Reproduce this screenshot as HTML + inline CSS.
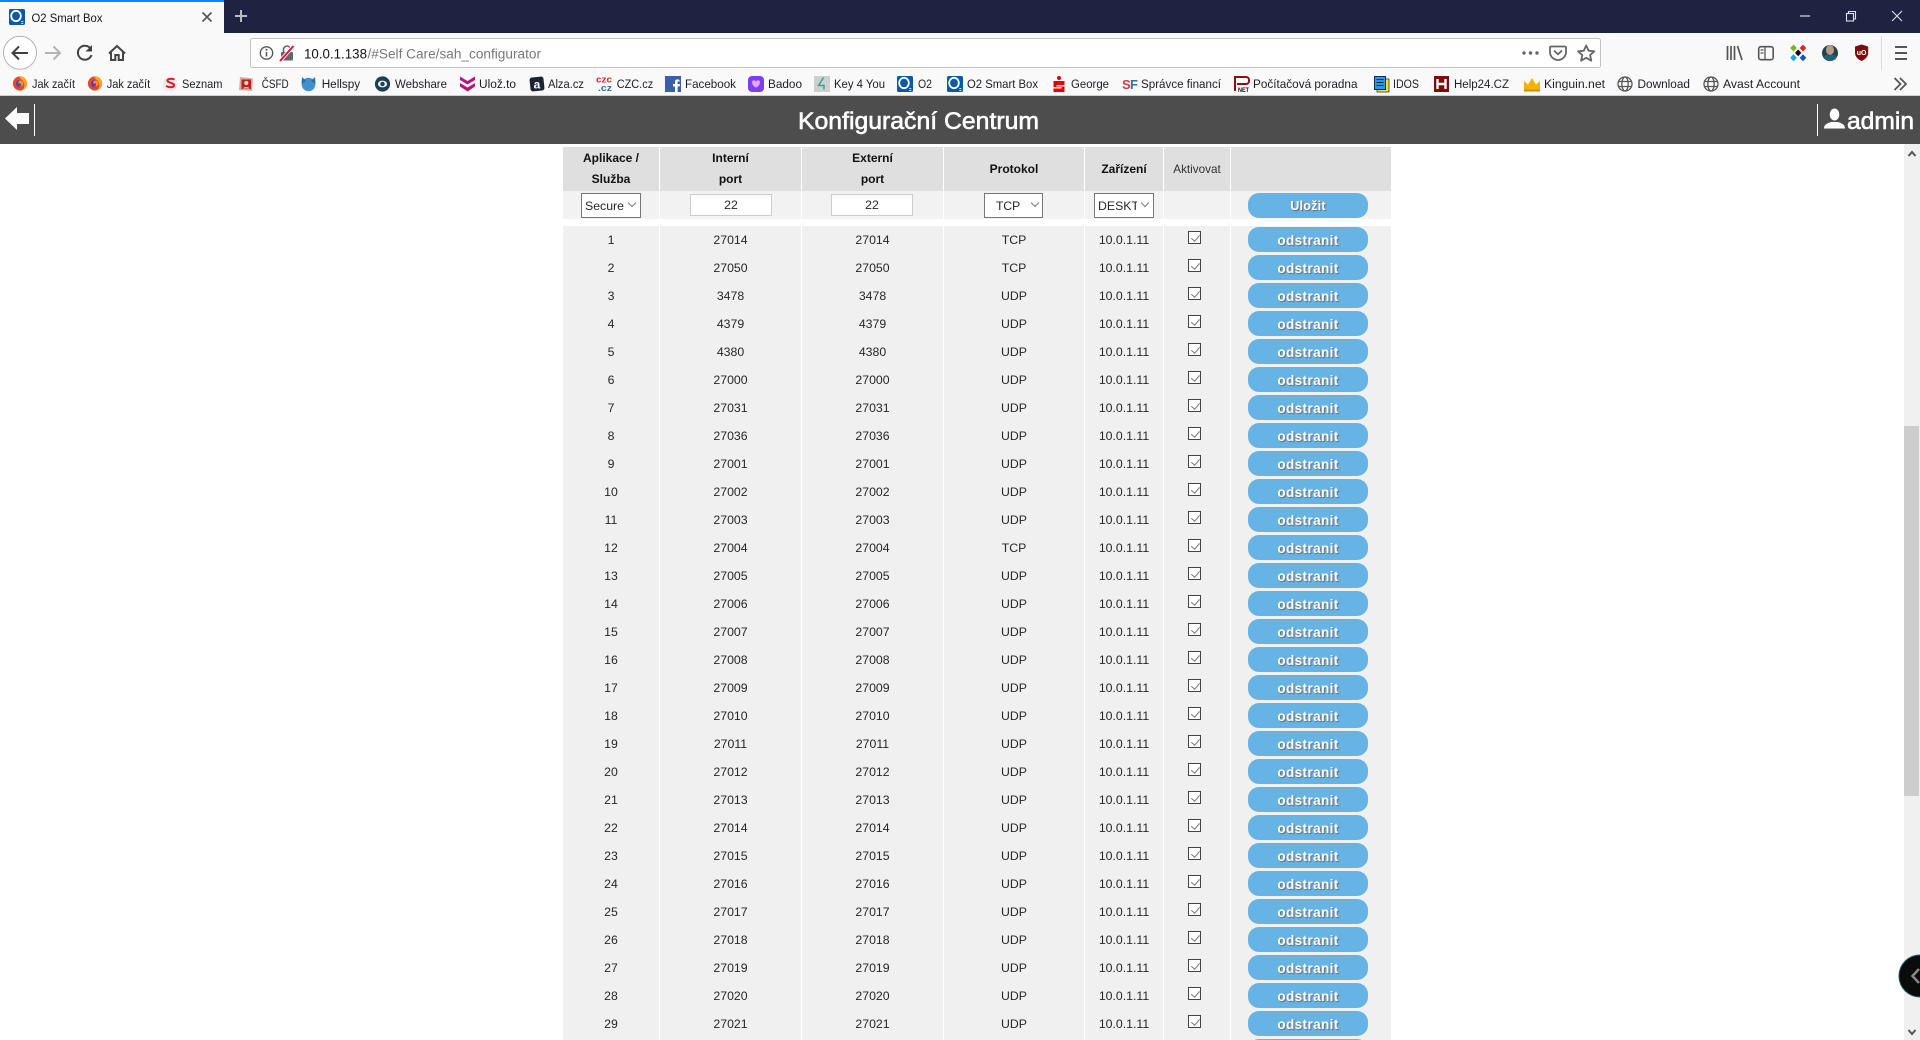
<!DOCTYPE html>
<html lang="cs"><head><meta charset="utf-8"><title>O2 Smart Box</title>
<style>
html,body{margin:0;padding:0;background:#fff;width:1920px;height:1040px;overflow:hidden}
#page{position:relative;width:1920px;height:1040px;overflow:hidden;font-family:"Liberation Sans",sans-serif;color:#222}
#ch{position:absolute;left:0;top:0}
#ch text{font-family:"Liberation Sans",sans-serif}
.bm{font-size:12.3px;fill:#1c1c24}
.t{position:absolute;left:563px;top:147px;width:828px}
.r{display:grid;grid-template-columns:96px 141px 141px 140px 78px 66px 160px;column-gap:1px;height:27px;margin-bottom:1px;font-size:12.3px;color:#262626}
.r>span{background:#f0f0f0;text-align:center;line-height:28.5px;position:relative;display:block}
.h{height:43px}
.h>span{background:#dfdfdf;font-weight:bold;font-size:12px;line-height:21px;padding-top:.5px;color:#111}
.h>span.m{line-height:44.5px;padding:0}
.h>span.a{font-weight:normal;font-size:11.7px;color:#333;line-height:46px;padding:0}
.f{height:28px;margin-bottom:7px}
.f>span{background:#f2f2f2}
.b{position:absolute;left:17px;top:1px;width:120px;height:25px;border-radius:11px;background:#66b3e6;color:#fff;font-weight:bold;font-size:13.6px;letter-spacing:.35px;line-height:27px;text-align:center;text-shadow:1px 1px 1px #6a6a6a}
.f .b{top:2px;font-size:12.6px;letter-spacing:.2px;line-height:26.5px}
.c{position:absolute;left:24px;top:5px;width:11px;height:11px;border:1.3px solid #444;background:#fff;box-sizing:content-box}
.c:after{content:"";position:absolute;left:3.5px;top:.5px;width:3.5px;height:7px;border:solid #777;border-width:0 1.2px 1.2px 0;transform:rotate(40deg)}
.s{position:absolute;box-sizing:border-box;top:193px;height:25px;background:#fff;border:1px solid #767676;font-size:12.3px;line-height:24px;color:#262626;overflow:hidden;white-space:nowrap}
.s:after{content:"";position:absolute;left:47px;top:6px;width:5px;height:5px;border:solid #777;border-width:0 1px 1px 0;transform:rotate(45deg);background:#fff;box-shadow:4px 4px 0 #fff}
.i{position:absolute;box-sizing:border-box;top:194px;height:22px;width:82px;background:#fff;border:1px solid #ccc;text-align:center;font-size:12.3px;line-height:21.5px;color:#262626}
#sb{position:absolute;left:1904px;top:144px;width:16px;height:896px;background:#f0f0f0}
#th{position:absolute;left:1904px;top:426px;width:15px;height:370px;background:#cdcdcd}
#ov{position:absolute;left:0;top:0;pointer-events:none}
</style></head><body>
<div id="page">

<div class="t">
<div class="r h"><span>Aplikace /<br>Služba</span><span>Interní<br>port</span><span>Externí<br>port</span><span class="m">Protokol</span><span class="m">Zařízení</span><span class="a">Aktivovat</span><span></span></div>
<div class="r f"><span></span><span></span><span></span><span></span><span></span><span></span><span><div class="b">Uložit</div></span></div>
<div class="r"><span>1</span><span>27014</span><span>27014</span><span>TCP</span><span>10.0.1.11</span><span><div class="c"></div></span><span><div class="b">odstranit</div></span></div>
<div class="r"><span>2</span><span>27050</span><span>27050</span><span>TCP</span><span>10.0.1.11</span><span><div class="c"></div></span><span><div class="b">odstranit</div></span></div>
<div class="r"><span>3</span><span>3478</span><span>3478</span><span>UDP</span><span>10.0.1.11</span><span><div class="c"></div></span><span><div class="b">odstranit</div></span></div>
<div class="r"><span>4</span><span>4379</span><span>4379</span><span>UDP</span><span>10.0.1.11</span><span><div class="c"></div></span><span><div class="b">odstranit</div></span></div>
<div class="r"><span>5</span><span>4380</span><span>4380</span><span>UDP</span><span>10.0.1.11</span><span><div class="c"></div></span><span><div class="b">odstranit</div></span></div>
<div class="r"><span>6</span><span>27000</span><span>27000</span><span>UDP</span><span>10.0.1.11</span><span><div class="c"></div></span><span><div class="b">odstranit</div></span></div>
<div class="r"><span>7</span><span>27031</span><span>27031</span><span>UDP</span><span>10.0.1.11</span><span><div class="c"></div></span><span><div class="b">odstranit</div></span></div>
<div class="r"><span>8</span><span>27036</span><span>27036</span><span>UDP</span><span>10.0.1.11</span><span><div class="c"></div></span><span><div class="b">odstranit</div></span></div>
<div class="r"><span>9</span><span>27001</span><span>27001</span><span>UDP</span><span>10.0.1.11</span><span><div class="c"></div></span><span><div class="b">odstranit</div></span></div>
<div class="r"><span>10</span><span>27002</span><span>27002</span><span>UDP</span><span>10.0.1.11</span><span><div class="c"></div></span><span><div class="b">odstranit</div></span></div>
<div class="r"><span>11</span><span>27003</span><span>27003</span><span>UDP</span><span>10.0.1.11</span><span><div class="c"></div></span><span><div class="b">odstranit</div></span></div>
<div class="r"><span>12</span><span>27004</span><span>27004</span><span>TCP</span><span>10.0.1.11</span><span><div class="c"></div></span><span><div class="b">odstranit</div></span></div>
<div class="r"><span>13</span><span>27005</span><span>27005</span><span>UDP</span><span>10.0.1.11</span><span><div class="c"></div></span><span><div class="b">odstranit</div></span></div>
<div class="r"><span>14</span><span>27006</span><span>27006</span><span>UDP</span><span>10.0.1.11</span><span><div class="c"></div></span><span><div class="b">odstranit</div></span></div>
<div class="r"><span>15</span><span>27007</span><span>27007</span><span>UDP</span><span>10.0.1.11</span><span><div class="c"></div></span><span><div class="b">odstranit</div></span></div>
<div class="r"><span>16</span><span>27008</span><span>27008</span><span>UDP</span><span>10.0.1.11</span><span><div class="c"></div></span><span><div class="b">odstranit</div></span></div>
<div class="r"><span>17</span><span>27009</span><span>27009</span><span>UDP</span><span>10.0.1.11</span><span><div class="c"></div></span><span><div class="b">odstranit</div></span></div>
<div class="r"><span>18</span><span>27010</span><span>27010</span><span>UDP</span><span>10.0.1.11</span><span><div class="c"></div></span><span><div class="b">odstranit</div></span></div>
<div class="r"><span>19</span><span>27011</span><span>27011</span><span>UDP</span><span>10.0.1.11</span><span><div class="c"></div></span><span><div class="b">odstranit</div></span></div>
<div class="r"><span>20</span><span>27012</span><span>27012</span><span>UDP</span><span>10.0.1.11</span><span><div class="c"></div></span><span><div class="b">odstranit</div></span></div>
<div class="r"><span>21</span><span>27013</span><span>27013</span><span>UDP</span><span>10.0.1.11</span><span><div class="c"></div></span><span><div class="b">odstranit</div></span></div>
<div class="r"><span>22</span><span>27014</span><span>27014</span><span>UDP</span><span>10.0.1.11</span><span><div class="c"></div></span><span><div class="b">odstranit</div></span></div>
<div class="r"><span>23</span><span>27015</span><span>27015</span><span>UDP</span><span>10.0.1.11</span><span><div class="c"></div></span><span><div class="b">odstranit</div></span></div>
<div class="r"><span>24</span><span>27016</span><span>27016</span><span>UDP</span><span>10.0.1.11</span><span><div class="c"></div></span><span><div class="b">odstranit</div></span></div>
<div class="r"><span>25</span><span>27017</span><span>27017</span><span>UDP</span><span>10.0.1.11</span><span><div class="c"></div></span><span><div class="b">odstranit</div></span></div>
<div class="r"><span>26</span><span>27018</span><span>27018</span><span>UDP</span><span>10.0.1.11</span><span><div class="c"></div></span><span><div class="b">odstranit</div></span></div>
<div class="r"><span>27</span><span>27019</span><span>27019</span><span>UDP</span><span>10.0.1.11</span><span><div class="c"></div></span><span><div class="b">odstranit</div></span></div>
<div class="r"><span>28</span><span>27020</span><span>27020</span><span>UDP</span><span>10.0.1.11</span><span><div class="c"></div></span><span><div class="b">odstranit</div></span></div>
<div class="r"><span>29</span><span>27021</span><span>27021</span><span>UDP</span><span>10.0.1.11</span><span><div class="c"></div></span><span><div class="b">odstranit</div></span></div>
<div class="r"><span></span><span></span><span></span><span></span><span></span><span></span><span><div class="b"></div></span></div>
</div>

<div class="s" style="left:581px;width:60px;padding-left:3px">Secure</div>
<div class="i" style="left:690px">22</div>
<div class="i" style="left:831px">22</div>
<div class="s" style="left:984px;width:59px;padding-left:11px;letter-spacing:-.2px">TCP</div>
<div class="s" style="left:1094px;width:60px;padding-left:3px"><span style="display:inline-block;width:38.5px;overflow:hidden;vertical-align:top">DESKTOP</span></div>

<div id="sb"></div><div id="th"></div>

<svg id="ch" width="1920" height="144" viewBox="0 0 1920 144" xmlns="http://www.w3.org/2000/svg">
<defs>
<symbol id="ff" viewBox="0 0 16 16" overflow="visible"><circle cx="8" cy="8" r="7.6" fill="#e8492b"/><path d="M8 .4A7.6 7.6 0 0 1 15.6 8 7.6 7.6 0 0 1 9 15.5C13 14 14 9 11 5 9.500 3.500 7 3 8 .4z" fill="#f9a825"/><circle cx="7.500" cy="8.200" r="4" fill="#5b3fb5"/><path d="M7 5c3-1 5 1 4.500 4-1 2-3 3-5 2.500 2 0 3-1.500 2.500-3-1-1-3-.5-3-1.500z" fill="#f7941d"/></symbol>
<symbol id="o2" viewBox="0 0 16 16" overflow="visible"><rect width="16" height="16" rx="1.500" fill="#0a5ba6"/><ellipse cx="7" cy="7" rx="4.800" ry="5.200" fill="none" stroke="#fff" stroke-width="1.800"/><path d="M12.300 12.500h2M12.300 14.500h2" stroke="#cfe4f5" stroke-width="1"/></symbol>
<symbol id="gl" viewBox="0 0 16 16" overflow="visible"><g fill="none" stroke="#555" stroke-width="1.300"><circle cx="8" cy="8" r="7"/><ellipse cx="8" cy="8" rx="3.200" ry="7"/><path d="M1.500 5.500h13M1.500 10.500h13"/></g></symbol>
</defs>

<!-- tab strip -->
<rect width="1920" height="33" fill="#1f2342"/>
<rect width="224" height="33" fill="#f9f9fa"/>
<rect width="224" height="2" fill="#0a84ff"/>
<use href="#o2" x="9" y="9" width="16" height="16"/>
<text x="31.500" y="22" font-size="12.300" fill="#15141a" textLength="71" lengthAdjust="spacingAndGlyphs">O2 Smart Box</text>
<path d="M202.500 12.500l9 9M211.500 12.500l-9 9" stroke="#555" stroke-width="1.600"/>
<path d="M241 10v12M235 16h12" stroke="#b8bac4" stroke-width="2"/>
<path d="M1800 16h10" stroke="#e0e0e6" stroke-width="1.200"/>
<g fill="none" stroke="#e0e0e6" stroke-width="1.100"><rect x="1846.500" y="13.500" width="7" height="7.500"/><path d="M1848.500 13.500v-2h7v7.500h-2"/></g>
<path d="M1892 11l10 10M1902 11l-10 10" stroke="#e0e0e6" stroke-width="1.100"/>

<!-- nav toolbar -->
<rect y="33" width="1920" height="62" fill="#f9f9fa"/>
<rect y="95" width="1920" height="1" fill="#d0d0d2"/>
<circle cx="20" cy="52.700" r="16.500" fill="#fff" stroke="#b3b3b5"/>
<path d="M28 53H13M19 46.500l-6.500 6.500 6.500 6.500" fill="none" stroke="#3f3f42" stroke-width="2"/>
<path d="M45 53h15M53.500 46.500l6.500 6.500-6.500 6.500" fill="none" stroke="#b5b5b7" stroke-width="2"/>
<path d="M90.500 48.500A7 7 0 1 0 91.500 55" fill="none" stroke="#444" stroke-width="2"/><path d="M92 45v6.500h-6.500z" fill="#444"/>
<path d="M109 53.500l8-7.500 8 7.500M111 52v8h4.300v-5h3.400v5h4.300v-8" fill="none" stroke="#444" stroke-width="2"/>

<rect x="250.500" y="38.500" width="1350" height="29" rx="2" fill="#fff" stroke="#c2c2c4"/>
<circle cx="266.500" cy="53" r="6.200" fill="none" stroke="#555" stroke-width="1.300"/><path d="M266.500 52v4.500" stroke="#555" stroke-width="1.500"/><circle cx="266.500" cy="49.700" r="1" fill="#555"/>
<rect x="281" y="52" width="12" height="8.500" rx="1" fill="#666"/><path d="M283.500 52v-2.500a3.500 3.500 0 0 1 7 0V52" fill="none" stroke="#666" stroke-width="1.600"/><path d="M280 61l13.500-15" stroke="#fff" stroke-width="3.600"/><path d="M280 61l13.500-15" stroke="#e2103c" stroke-width="2"/>
<text x="304" y="58.700" font-size="13.500" fill="#111" textLength="63" lengthAdjust="spacingAndGlyphs">10.0.1.138</text>
<text x="367.500" y="58.700" font-size="13.500" fill="#777" textLength="173.500" lengthAdjust="spacingAndGlyphs">/#Self Care/sah_configurator</text>
<g fill="#666"><circle cx="1524" cy="53" r="1.700"/><circle cx="1530.500" cy="53" r="1.700"/><circle cx="1537" cy="53" r="1.700"/></g>
<path d="M1551 46.500h14a1 1 0 0 1 1 1v4.500a8 8 0 0 1-16 0v-4.500a1 1 0 0 1 1-1z" fill="none" stroke="#666" stroke-width="1.800"/><path d="M1554 50.500l4 3.800 4-3.800" fill="none" stroke="#666" stroke-width="1.800"/>
<path d="M1586.200 45.500l2.400 5.200 5.700.6-4.200 3.800 1.200 5.600-5.100-2.900-5.100 2.900 1.200-5.600-4.200-3.800 5.700-.6z" fill="none" stroke="#666" stroke-width="1.800" stroke-linejoin="round"/>

<path d="M1727.500 46v14M1731 46v14M1734.500 46v14M1737.500 46l4.500 14" fill="none" stroke="#555" stroke-width="1.700"/>
<rect x="1758.700" y="46.700" width="14.500" height="13" rx="2.200" fill="none" stroke="#555" stroke-width="1.600"/><path d="M1765 46.700v13M1760.500 50h3M1760.500 53h3" stroke="#555" stroke-width="1.300"/>
<path d="M1793.500 44.500l3.300 3.500-3.300 3.500-3.300-3.500z" fill="#7cb518"/><path d="M1803 44.500l3.300 3.500-3.300 3.500-3.300-3.500z" fill="#e32222"/><path d="M1793.500 54.200l3.300 3.500-3.300 3.500-3.300-3.500z" fill="#16a5e0"/><path d="M1803 54.200l3.300 3.500-3.300 3.500-3.300-3.500z" fill="#0e55b5"/><path d="M1798.200 49.500l3.200 3.400-3.200 3.400-3.200-3.400z" fill="#111"/>
<circle cx="1830" cy="53" r="8" fill="#25424d"/><ellipse cx="1830" cy="50" rx="4" ry="5" fill="#b99a86"/><path d="M1823 57a8 8 0 0 0 14 0l-3-2h-8z" fill="#1f6272"/>
<path d="M1855 46.500l6.600-2 6.600 2v6.500c0 3.500-3 6.500-6.600 8-3.600-1.500-6.600-4.500-6.600-8z" fill="#800d0d"/><text x="1861.600" y="55" font-size="7" font-weight="bold" fill="#fff" text-anchor="middle">uO</text>
<rect x="1881" y="36" width="1" height="34" fill="#dcdcde"/>
<path d="M1895 47h12M1895 53h12M1895 59h12" stroke="#555" stroke-width="2"/>

<!-- bookmarks -->
<use href="#ff" x="12.500" y="76" width="15" height="15"/><text class="bm" x="32" y="88" textLength="43" lengthAdjust="spacingAndGlyphs">Jak začít</text>
<use href="#ff" x="87.500" y="76" width="15" height="15"/><text class="bm" x="106.700" y="88" textLength="43.500" lengthAdjust="spacingAndGlyphs">Jak začít</text>
<circle cx="170" cy="84" r="7.500" fill="#ececec"/><path d="M174.500 79.500c-3-1.500-8-.5-7 1.500s7 2 6.500 4.500-5 2-8 .5" fill="none" stroke="#d62020" stroke-width="2"/><text class="bm" x="182" y="88" textLength="40.500" lengthAdjust="spacingAndGlyphs">Seznam</text>
<path d="M240 77l13 1.500-1 12.500-13-1z" fill="#d9a9a5"/><rect x="241.500" y="79.500" width="9.500" height="9.500" fill="#b3261e"/><circle cx="246.300" cy="83" r="2" fill="#f3d6d6"/><path d="M243 88.500c.5-2 6-2 6.500 0z" fill="#f3d6d6"/><text class="bm" x="261.700" y="88" textLength="27" lengthAdjust="spacingAndGlyphs">ČSFD</text>
<circle cx="308.500" cy="84.500" r="6.800" fill="#3e92cf"/><path d="M301.500 84l.5-7 4 4zM315.500 84l-.5-7-4 4z" fill="#2c6ea3"/><text class="bm" x="321.700" y="88" textLength="38.500" lengthAdjust="spacingAndGlyphs">Hellspy</text>
<circle cx="382.500" cy="84" r="7.600" fill="#1e3f4f"/><ellipse cx="382.500" cy="84" rx="4.600" ry="3.400" fill="#e9eef0"/><circle cx="382.500" cy="84" r="2.200" fill="#1e3f4f"/><text class="bm" x="395" y="88" textLength="52" lengthAdjust="spacingAndGlyphs">Webshare</text>
<path d="M460 76.500l7.500 4.500 7.500-4.500v3.500l-7.500 4.500-7.500-4.500zM460 83l7.500 4.500 7.500-4.500v3.500l-7.500 5-7.500-5z" fill="#b3167f"/><text class="bm" x="479" y="88" textLength="37" lengthAdjust="spacingAndGlyphs">Ulož.to</text>
<rect x="530" y="77" width="14" height="14" rx="2.500" fill="#1b2334" transform="rotate(-6 537 84)"/><text x="537" y="88.500" font-size="12" font-weight="bold" fill="#fff" text-anchor="middle">a</text><text class="bm" x="548" y="88" textLength="36" lengthAdjust="spacingAndGlyphs">Alza.cz</text>
<text x="596" y="82.500" font-size="9" font-weight="bold" fill="#d6242a" textLength="16" lengthAdjust="spacingAndGlyphs">czc</text><text x="598" y="91" font-size="9" font-weight="bold" fill="#2d6f9e" textLength="14" lengthAdjust="spacingAndGlyphs">.cz</text><text class="bm" x="616.700" y="88" textLength="36.500" lengthAdjust="spacingAndGlyphs">CZC.cz</text>
<rect x="665" y="76" width="16" height="16" fill="#3b5fa8"/><path d="M679 79.500h-2c-1.500 0-2 .8-2 2v2.500h-2v2.500h2V92h2.600v-5.500h2l.4-2.500h-2.400v-2c0-.4.200-.6.600-.6h1.800z" fill="#fff"/><text class="bm" x="685" y="88" textLength="51" lengthAdjust="spacingAndGlyphs">Facebook</text>
<rect x="748" y="76" width="16" height="16" rx="4" fill="#7b3ff2"/><path d="M752 82c0-2 3-2.500 4-.5 1-2 4-1.500 4 .5 0 3-2.500 5.500-4 5.500s-4-2.500-4-5.500z" fill="#e6a5ee"/><text class="bm" x="768" y="88" textLength="34" lengthAdjust="spacingAndGlyphs">Badoo</text>
<rect x="814" y="76" width="16" height="16" fill="#cfcfcf"/><path d="M823.500 77.500l-5 8h5.500v4" fill="none" stroke="#3aa39a" stroke-width="1.500"/><text class="bm" x="834" y="88" textLength="51" lengthAdjust="spacingAndGlyphs">Key 4 You</text>
<use href="#o2" x="897" y="76" width="16" height="16"/><text class="bm" x="918" y="88" textLength="14" lengthAdjust="spacingAndGlyphs">O2</text>
<use href="#o2" x="947" y="76" width="16" height="16"/><text class="bm" x="967" y="88" textLength="71" lengthAdjust="spacingAndGlyphs">O2 Smart Box</text>
<circle cx="1059" cy="78" r="2" fill="#e60000"/><path d="M1053.500 81h11v4h-8v1.500h8V92h-11v-3.500h8V87h-8z" fill="#e60000"/><text class="bm" x="1071" y="88" textLength="38" lengthAdjust="spacingAndGlyphs">George</text>
<text x="1122" y="89" font-size="13" font-weight="bold" fill="#c8413c" textLength="8">S</text><text x="1130" y="89" font-size="13" font-weight="bold" fill="#3c6ea3" textLength="7.500">F</text><text class="bm" x="1141" y="88" textLength="80" lengthAdjust="spacingAndGlyphs">Správce financí</text>
<path d="M1235 91V77h11a3 3 0 0 1 3 3v1a3 3 0 0 1-3 3h-9" fill="none" stroke="#8f1010" stroke-width="2"/><text x="1238" y="92" font-size="6" font-weight="bold" fill="#111" textLength="11" lengthAdjust="spacingAndGlyphs">NET</text><text class="bm" x="1253" y="88" textLength="104.500" lengthAdjust="spacingAndGlyphs">Počítačová poradna</text>
<rect x="1377" y="79" width="12" height="13" fill="#f5e03a" stroke="#333" stroke-width=".8"/><rect x="1374.500" y="76.500" width="11" height="13" fill="#2b9be8" stroke="#1b2a4a"/><path d="M1376.500 79.500h7M1376.500 82.500h7M1376.500 85.500h7" stroke="#123" stroke-width="1"/><text class="bm" x="1393" y="88" textLength="26" lengthAdjust="spacingAndGlyphs">IDOS</text>
<rect x="1434" y="76" width="15" height="16" fill="#7d0c0c"/><path d="M1437.500 79v10M1445.500 79v10M1437.500 84h8" stroke="#fff" stroke-width="2.400"/><text class="bm" x="1454" y="88" textLength="55" lengthAdjust="spacingAndGlyphs">Help24.CZ</text>
<path d="M1524 90v-9l4 3.500 4-6.500 4 6.500 4-3.500v9z" fill="#f5b301"/><path d="M1524 89.500h16v2h-16z" fill="#c98e00"/><text class="bm" x="1544" y="88" textLength="61" lengthAdjust="spacingAndGlyphs">Kinguin.net</text>
<use href="#gl" x="1617" y="76" width="16" height="16"/><text class="bm" x="1637.500" y="88" textLength="52.500" lengthAdjust="spacingAndGlyphs">Download</text>
<use href="#gl" x="1703" y="76" width="16" height="16"/><text class="bm" x="1723" y="88" textLength="77" lengthAdjust="spacingAndGlyphs">Avast Account</text>
<path d="M1894.500 78l6 6-6 6M1900 78l6 6-6 6" fill="none" stroke="#555" stroke-width="1.800"/>

<!-- page header -->
<rect y="96" width="1920" height="48" fill="#4d4d4d"/>
<path d="M5 118.500l12-11.500v6h12v11H17v6z" fill="#fff"/>
<rect x="34" y="104" width="1" height="32" fill="#fff"/>
<rect x="1817" y="104" width="1" height="32" fill="#fff"/>
<text x="798" y="129" font-size="24" fill="#fff" stroke="#fff" stroke-width=".6" textLength="241" lengthAdjust="spacingAndGlyphs">Konfigurační Centrum</text>
<ellipse cx="1834.500" cy="114.500" rx="4.800" ry="6" fill="#fff"/><path d="M1824 128.500c0-4 3-5 7-6.500h7c4 1.500 7 2.500 7 6.500z" fill="#fff"/>
<text x="1847" y="129" font-size="24" fill="#fff" stroke="#fff" stroke-width=".6" textLength="67" lengthAdjust="spacingAndGlyphs">admin</text>
</svg>

<svg id="ov" width="1920" height="1040" viewBox="0 0 1920 1040" xmlns="http://www.w3.org/2000/svg">
<path d="M1908.500 156l3.500-4 3.500 4" fill="none" stroke="#555" stroke-width="2"/>
<path d="M1908.500 1030l3.500 4 3.500-4" fill="none" stroke="#555" stroke-width="2"/>
<circle cx="1920" cy="976" r="21" fill="#0b0b0b" stroke="#1e5a66" stroke-width="1"/>
<path d="M1919 969l-6.500 7 6.500 7" fill="none" stroke="#888" stroke-width="2.500"/>
</svg>
</div>
</body></html>
